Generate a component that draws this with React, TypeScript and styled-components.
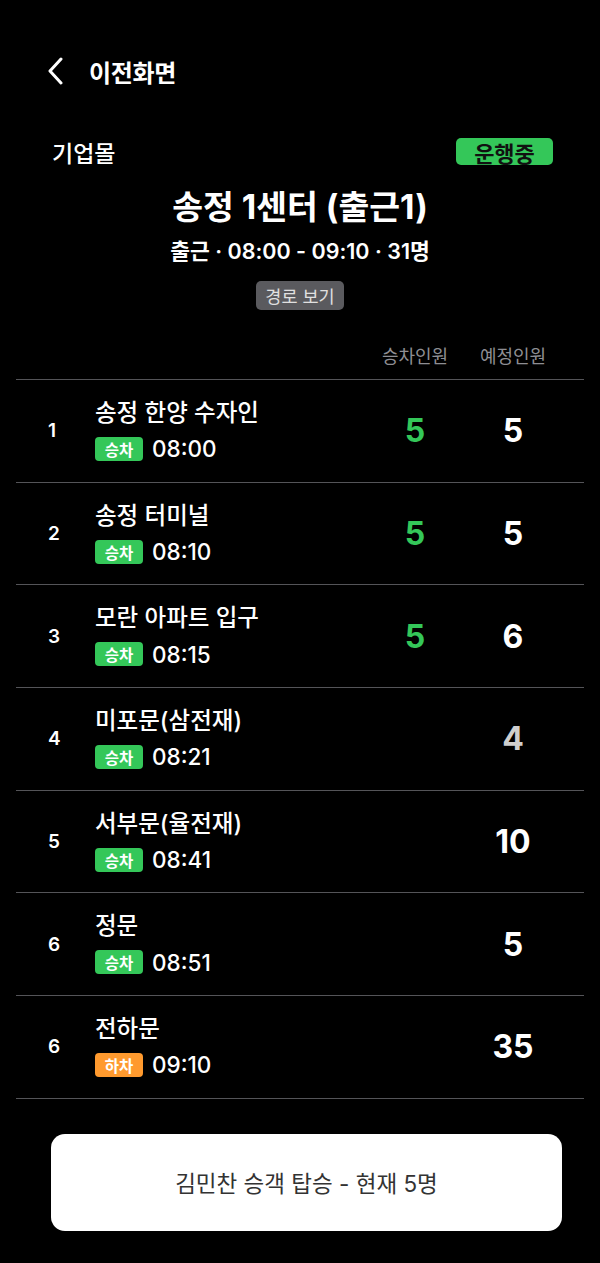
import styled, { createGlobalStyle } from 'styled-components';

const GlobalStyle = createGlobalStyle`
  html, body {
    margin: 0;
    padding: 0;
    background: #000;
  }
  body {
    font-family: "Inter", "Noto Sans CJK KR", sans-serif;
    color: #fff;
  }
`;

const Page = styled.div`
  width: 600px;
  min-height: 1263px;
  box-sizing: border-box;
  padding: 49px 16px 0;
  background: #000;
`;

const NavBar = styled.div`
  display: flex;
  align-items: center;
  height: 44px;
  padding-left: 32px;
  gap: 25px;
`;

const NavTitle = styled.span`
  font-size: 24px;
  font-weight: 600;
  letter-spacing: -0.3px;
`;

const InfoRow = styled.div`
  display: flex;
  align-items: center;
  justify-content: space-between;
  height: 27px;
  margin-top: 45px;
  padding: 0 31px 0 36px;
`;

const Company = styled.span`
  font-size: 23px;
  font-weight: 500;
`;

const StatusBadge = styled.span`
  display: flex;
  align-items: center;
  justify-content: center;
  width: 97px;
  height: 27px;
  border-radius: 5px;
  background: #34c759;
  color: #111;
  font-size: 22px;
  font-weight: 700;
`;

const Title = styled.h1`
  margin: 24px 0 0;
  text-align: center;
  font-size: 33.5px;
  line-height: 36px;
  font-weight: 700;
`;

const Subtitle = styled.div`
  margin-top: 14px;
  text-align: center;
  font-size: 21.5px;
  line-height: 24px;
  font-weight: 600;
`;

const RouteButtonWrap = styled.div`
  display: flex;
  justify-content: center;
  margin-top: 18px;
`;

const RouteButton = styled.button`
  width: 88px;
  height: 29px;
  border: none;
  border-radius: 5px;
  background: #5a5a5e;
  color: #e0e0e0;
  font-family: inherit;
  font-size: 17.5px;
  padding: 0;
`;

const Grid = styled.div`
  display: grid;
  grid-template-columns: 47px 1fr 98px 98px;
  padding: 0 22px 0 32px;
  align-items: center;
`;

const HeaderRow = styled(Grid)`
  margin-top: 36px;
  padding-bottom: 11px;
  border-bottom: 1px solid #545458;
`;

const HeaderCell = styled.span`
  text-align: center;
  font-size: 18px;
  line-height: 22px;
  color: #8e8e93;
`;

const StopRow = styled(Grid)`
  height: 101.7px;
  border-bottom: 1px solid #545458;
`;

const Index = styled.span`
  font-size: 19px;
  font-weight: 600;
`;

const StopInfo = styled.div`
  display: flex;
  flex-direction: column;
  gap: 8px;
`;

const StopName = styled.span`
  font-size: 23.5px;
  line-height: 28px;
  font-weight: 500;
`;

const TimeLine = styled.div`
  display: flex;
  align-items: center;
  gap: 9px;
  height: 28px;
`;

const KindBadge = styled.span<{ $drop?: boolean }>`
  display: flex;
  align-items: center;
  justify-content: center;
  width: 48px;
  height: 24px;
  border-radius: 4px;
  background: ${p => (p.$drop ? '#ff9a2e' : '#34c759')};
  color: #fff;
  font-size: 15.5px;
  font-weight: 600;
`;

const Time = styled.span`
  font-size: 22.5px;
  font-weight: 500;
`;

const Count = styled.span<{ $tone: 'green' | 'white' | 'gray' }>`
  text-align: center;
  font-size: 32px;
  font-weight: 700;
  color: ${p => (p.$tone === 'green' ? '#34c759' : p.$tone === 'gray' ? '#cfcfcf' : '#fff')};
`;

const BoardButton = styled.button`
  display: block;
  width: 511px;
  height: 97px;
  margin: 35px 0 0 35px;
  border: none;
  border-radius: 14px;
  background: #fff;
  color: #333;
  font-family: inherit;
  font-size: 22.5px;
  font-weight: 400;
`;

const stops = [
  { no: 1, name: '송정 한양 수자인', kind: '승차', time: '08:00', boarded: 5, planned: 5 },
  { no: 2, name: '송정 터미널', kind: '승차', time: '08:10', boarded: 5, planned: 5 },
  { no: 3, name: '모란 아파트 입구', kind: '승차', time: '08:15', boarded: 5, planned: 6 },
  { no: 4, name: '미포문(삼전재)', kind: '승차', time: '08:21', boarded: null, planned: 4, dim: true },
  { no: 5, name: '서부문(율전재)', kind: '승차', time: '08:41', boarded: null, planned: 10 },
  { no: 6, name: '정문', kind: '승차', time: '08:51', boarded: null, planned: 5 },
  { no: 6, name: '전하문', kind: '하차', time: '09:10', boarded: null, planned: 35 },
];

const Chevron = () => (
  <svg width="16" height="28" viewBox="0 0 16 28" fill="none">
    <path d="M13 2 L2 14 L13 26" stroke="#fff" strokeWidth="3" strokeLinecap="round" strokeLinejoin="round" />
  </svg>
);

export default function App() {
  return (
    <>
      <GlobalStyle />
      <Page>
        <NavBar>
          <Chevron />
          <NavTitle>이전화면</NavTitle>
        </NavBar>
        <InfoRow>
          <Company>기업몰</Company>
          <StatusBadge>운행중</StatusBadge>
        </InfoRow>
        <Title>송정 1센터 (출근1)</Title>
        <Subtitle>출근 · 08:00 - 09:10 · 31명</Subtitle>
        <RouteButtonWrap>
          <RouteButton>경로 보기</RouteButton>
        </RouteButtonWrap>
        <HeaderRow>
          <span />
          <span />
          <HeaderCell>승차인원</HeaderCell>
          <HeaderCell>예정인원</HeaderCell>
        </HeaderRow>
        {stops.map((s, i) => (
          <StopRow key={i}>
            <Index>{s.no}</Index>
            <StopInfo>
              <StopName>{s.name}</StopName>
              <TimeLine>
                <KindBadge $drop={s.kind === '하차'}>{s.kind}</KindBadge>
                <Time>{s.time}</Time>
              </TimeLine>
            </StopInfo>
            <Count $tone="green">{s.boarded ?? ''}</Count>
            <Count $tone={s.dim ? 'gray' : 'white'}>{s.planned}</Count>
          </StopRow>
        ))}
        <BoardButton>김민찬 승객 탑승 - 현재 5명</BoardButton>
      </Page>
    </>
  );
}
